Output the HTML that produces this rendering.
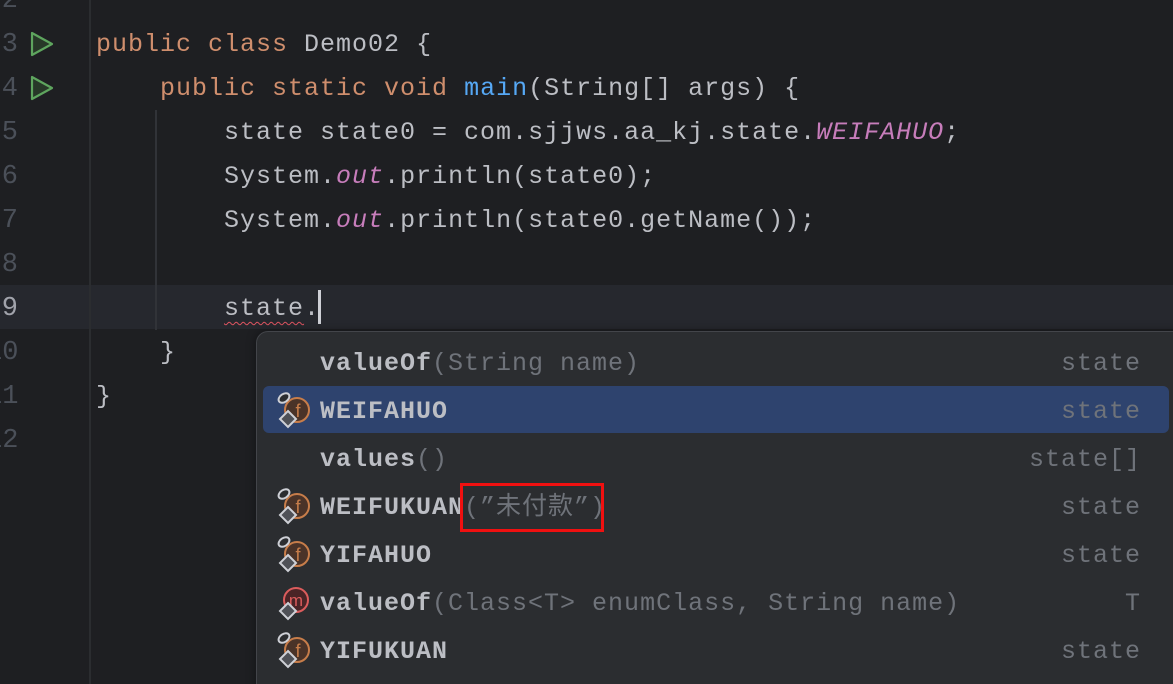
<!DOCTYPE html>
<html><head><meta charset="utf-8"><style>
html,body{margin:0;padding:0;width:1173px;height:684px;overflow:hidden;background:#1e1f22;}
body{position:relative;font-family:"Liberation Mono","Noto Sans CJK SC",monospace;font-size:25px;letter-spacing:1px;color:#bcbec4;}
.ln{position:absolute;left:-14px;width:32px;height:44px;line-height:46px;color:#4b5059;text-align:right;letter-spacing:0;font-size:27px}
.row{position:absolute;left:96px;height:44px;line-height:46px;white-space:pre}
.kw{color:#cf8e6d}.fn{color:#56a8f5}.st{color:#c77dbb;font-style:italic}
.cur{position:absolute;left:0;top:285px;width:1173px;height:44px;background:#26282e}
.gsep{position:absolute;left:89px;top:0;width:2px;height:684px;background:#2b2d30}
.guide{position:absolute;left:155px;top:110px;width:2px;height:220px;background:#313338}
.pop{position:absolute;left:256px;top:331px;width:930px;height:380px;background:#2b2d30;border:1px solid #43454a;border-radius:12px;box-shadow:0 0 10px rgba(0,0,0,.4)}
.it{position:absolute;left:256px;width:917px;height:48px;line-height:52px;white-space:pre}
.it .n{position:absolute;left:64px;font-weight:bold;color:#bcbec4}
.it .g{color:#6f737a;font-weight:normal}
.it .t{position:absolute;right:32px;color:#6f737a}
.sel{position:absolute;left:263px;top:386px;width:906px;height:47px;background:#2e436e;border-radius:6px}
.ic{position:absolute;left:274px;width:40px;height:40px}
</style></head><body>
<div class="cur"></div>
<div class="gsep"></div>
<div class="guide"></div>
<div class="ln" style="top:-22px">2</div>
<div class="ln" style="top:22px">3</div>
<div class="ln" style="top:66px">4</div>
<div class="ln" style="top:110px">5</div>
<div class="ln" style="top:154px">6</div>
<div class="ln" style="top:198px">7</div>
<div class="ln" style="top:242px">8</div>
<div class="ln" style="top:286px;color:#a1a3ab">9</div>
<div class="ln" style="top:330px">10</div>
<div class="ln" style="top:374px">11</div>
<div class="ln" style="top:418px">12</div>
<svg style="position:absolute;left:28px;top:30px" width="30" height="28"><path d="M4 3 L24 14 L4 25 Z" fill="#273828" stroke="#5ea55e" stroke-width="2.2" stroke-linejoin="round"/></svg>
<svg style="position:absolute;left:28px;top:74px" width="30" height="28"><path d="M4 3 L24 14 L4 25 Z" fill="#273828" stroke="#5ea55e" stroke-width="2.2" stroke-linejoin="round"/></svg>
<div class="row" style="top:22px"><span class="kw">public class </span>Demo02 {</div>
<div class="row" style="top:66px">    <span class="kw">public static void </span><span class="fn">main</span>(String[] args) {</div>
<div class="row" style="top:110px">        state state0 = com.sjjws.aa_kj.state.<span class="st">WEIFAHUO</span>;</div>
<div class="row" style="top:154px">        System.<span class="st">out</span>.println(state0);</div>
<div class="row" style="top:198px">        System.<span class="st">out</span>.println(state0.getName());</div>
<div class="row" style="top:286px">        <span style="text-decoration:underline wavy #e05561;text-underline-offset:6px;text-decoration-thickness:1px">state</span>.</div>
<div style="position:absolute;left:318px;top:290px;width:3px;height:34px;background:#ced0d6"></div>
<div class="row" style="top:330px">    }</div>
<div class="row" style="top:374px">}</div>
<div class="pop"></div>
<div class="sel"></div>
<div class="it" style="top:338px"><span class="n">valueOf<span class="g">(String name)</span></span><span class="t">state</span></div>
<div class="it" style="top:386px"><span class="n">WEIFAHUO</span><span class="t">state</span></div>
<div class="it" style="top:434px"><span class="n">values<span class="g">()</span></span><span class="t">state[]</span></div>
<div class="it" style="top:482px"><span class="n">WEIFUKUAN<span class="g">(”未付款”)</span></span><span class="t">state</span></div>
<div class="it" style="top:530px"><span class="n">YIFAHUO</span><span class="t">state</span></div>
<div class="it" style="top:578px"><span class="n">valueOf<span class="g">(Class&lt;T&gt; enumClass, String name)</span></span><span class="t">T</span></div>
<div class="it" style="top:626px"><span class="n">YIFUKUAN</span><span class="t">state</span></div>
<div style="position:absolute;left:460px;top:483px;width:138px;height:43px;border:3px solid #f01010"></div>
<svg class="ic" style="top:390px" viewBox="0 0 40 40"><circle cx="23" cy="20" r="12" fill="#4a3328" stroke="#c77d4a" stroke-width="2"/><text x="24" y="27" font-family="Liberation Sans" font-size="18" fill="#c77d4a" text-anchor="middle" letter-spacing="0">f</text><ellipse cx="10" cy="8" rx="6" ry="4" transform="rotate(-35 10 8)" fill="#2b2d30" stroke="#ced0d6" stroke-width="2"/><path d="M14 21 L22 29 L14 37 L6 29 Z" fill="#4f5157" stroke="#ced0d6" stroke-width="2"/></svg>
<svg class="ic" style="top:486px" viewBox="0 0 40 40"><circle cx="23" cy="20" r="12" fill="#4a3328" stroke="#c77d4a" stroke-width="2"/><text x="24" y="27" font-family="Liberation Sans" font-size="18" fill="#c77d4a" text-anchor="middle" letter-spacing="0">f</text><ellipse cx="10" cy="8" rx="6" ry="4" transform="rotate(-35 10 8)" fill="#2b2d30" stroke="#ced0d6" stroke-width="2"/><path d="M14 21 L22 29 L14 37 L6 29 Z" fill="#4f5157" stroke="#ced0d6" stroke-width="2"/></svg>
<svg class="ic" style="top:534px" viewBox="0 0 40 40"><circle cx="23" cy="20" r="12" fill="#4a3328" stroke="#c77d4a" stroke-width="2"/><text x="24" y="27" font-family="Liberation Sans" font-size="18" fill="#c77d4a" text-anchor="middle" letter-spacing="0">f</text><ellipse cx="10" cy="8" rx="6" ry="4" transform="rotate(-35 10 8)" fill="#2b2d30" stroke="#ced0d6" stroke-width="2"/><path d="M14 21 L22 29 L14 37 L6 29 Z" fill="#4f5157" stroke="#ced0d6" stroke-width="2"/></svg>
<svg class="ic" style="top:582px" viewBox="0 0 40 40"><circle cx="22" cy="18" r="12" fill="#4a2426" stroke="#db5c5c" stroke-width="2"/><text x="22" y="24" font-family="Liberation Sans" font-size="17" fill="#db5c5c" text-anchor="middle" letter-spacing="0">m</text><path d="M14 21 L22 29 L14 37 L6 29 Z" fill="#4f5157" stroke="#ced0d6" stroke-width="2"/></svg>
<svg class="ic" style="top:630px" viewBox="0 0 40 40"><circle cx="23" cy="20" r="12" fill="#4a3328" stroke="#c77d4a" stroke-width="2"/><text x="24" y="27" font-family="Liberation Sans" font-size="18" fill="#c77d4a" text-anchor="middle" letter-spacing="0">f</text><ellipse cx="10" cy="8" rx="6" ry="4" transform="rotate(-35 10 8)" fill="#2b2d30" stroke="#ced0d6" stroke-width="2"/><path d="M14 21 L22 29 L14 37 L6 29 Z" fill="#4f5157" stroke="#ced0d6" stroke-width="2"/></svg>
</body></html>
